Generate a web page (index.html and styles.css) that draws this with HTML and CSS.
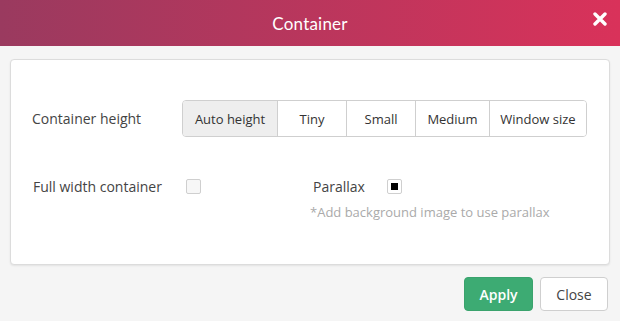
FILE: index.html
```html
<!DOCTYPE html>
<html lang="en">
<head>
    <meta charset="UTF-8">
    <title>Container</title>
    <link rel="stylesheet" href="styles.css">
</head>
<body>
    <div class="modal">
        <div class="modal-header">
            <h1 class="modal-title">Container</h1>
            <span class="modal-close">
                <svg width="14" height="14" viewBox="0 0 14 14">
                    <path d="M2 2 L12 12 M12 2 L2 12" stroke="#fff" stroke-width="3.4" stroke-linecap="round"/>
                </svg>
            </span>
        </div>
        <div class="modal-body">
            <div class="card">
                <div class="row row-height">
                    <span class="label">Container height</span>
                    <div class="btn-group">
                        <button class="seg active">Auto height</button>
                        <button class="seg seg-tiny">Tiny</button>
                        <button class="seg seg-small">Small</button>
                        <button class="seg seg-medium">Medium</button>
                        <button class="seg seg-window">Window size</button>
                    </div>
                </div>
                <div class="row row-options">
                    <div class="option option-full">
                        <span class="label">Full width container</span>
                        <span class="check"></span>
                    </div>
                    <div class="option-col">
                        <div class="option">
                            <span class="label">Parallax</span>
                            <span class="check checked"></span>
                        </div>
                        <p class="hint">*Add background image to use parallax</p>
                    </div>
                </div>
            </div>
        </div>
        <div class="modal-footer">
            <button class="btn btn-apply">Apply</button>
            <button class="btn btn-close">Close</button>
        </div>
    </div>
</body>
</html>
```

FILE: styles.css
```css
body {
    margin: 0;
    background-color: #f5f5f5;
    font-family: "Open Sans", Arial, sans-serif;
    color: #444;
}

.modal-header {
    height: 46px;
    display: flex;
    align-items: center;
    justify-content: center;
    position: relative;
    background: linear-gradient(to right, #9a3a5f, #d9325a);
}

.modal-title {
    margin: 0;
    font-family: "Lato", "Open Sans", sans-serif;
    font-weight: 400;
    font-size: 17px;
    color: #fff;
    letter-spacing: 0.2px;
}

.modal-close {
    position: absolute;
    right: 13px;
    top: 12px;
    width: 14px;
    height: 14px;
}

.modal-close svg {
    display: block;
}

.modal-body {
    padding: 13px 10px 0 10px;
}

.card {
    background-color: #fff;
    border: 1px solid #dcdcdc;
    border-radius: 4px;
    box-shadow: 0 1px 2px rgba(0, 0, 0, 0.08);
    height: 206px;
    box-sizing: border-box;
    padding: 40px 21px 0 21px;
}

.row {
    display: flex;
}

.row-height {
    align-items: center;
}

.row-height .label {
    width: 150px;
    font-size: 14px;
    color: #444;
}

.btn-group {
    display: flex;
    border: 1px solid #cfcfcf;
    border-radius: 4px;
    overflow: hidden;
}

.seg {
    height: 35px;
    border: 0;
    border-left: 1px solid #cfcfcf;
    background-color: #fff;
    font-family: "Open Sans", Arial, sans-serif;
    font-size: 13px;
    color: #333;
    padding: 0;
}

.seg.active {
    border-left: 0;
    background-color: #eeeeee;
    width: 94px;
}

.seg-tiny { width: 69px; }
.seg-small { width: 69px; }
.seg-medium { width: 74px; }
.seg-window { width: 97px; }

.row-options {
    margin-top: 40px;
    align-items: flex-start;
}

.option {
    display: flex;
    align-items: center;
    font-size: 14px;
}

.option-full {
    width: 280px;
    padding-left: 1px;
}

.option-full .label {
    width: 153px;
}

.option-col .label {
    width: 74px;
}

.check {
    width: 13px;
    height: 13px;
    border: 1px solid #cfcfcf;
    border-radius: 2px;
    background-color: #f7f7f7;
    position: relative;
}

.check.checked {
    background-color: #fff;
}

.check.checked::after {
    content: "";
    position: absolute;
    left: 3px;
    top: 3px;
    width: 7px;
    height: 7px;
    background-color: #000;
}

.hint {
    margin: 7px 0 0 -3px;
    font-size: 13px;
    color: #aaa;
}

.modal-footer {
    display: flex;
    justify-content: flex-end;
    gap: 7px;
    padding: 12px 12px 0 0;
}

.btn {
    height: 34px;
    border-radius: 4px;
    font-family: "Open Sans", Arial, sans-serif;
    font-size: 14px;
    padding: 0;
}

.btn-apply {
    width: 69px;
    background-color: #3dab73;
    border: 1px solid #3aa36d;
    color: #fff;
    font-weight: 600;
}

.btn-close {
    width: 68px;
    background-color: #fff;
    border: 1px solid #cfcfcf;
    color: #444;
}
```
